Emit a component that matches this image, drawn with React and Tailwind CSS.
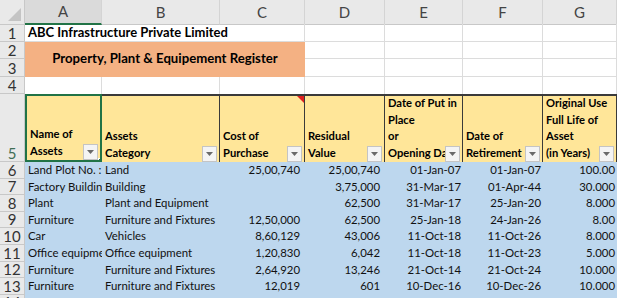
import React from "react";

const COLS = ["A", "B", "C", "D", "E", "F", "G"];

const HEADERS = [
  { lines: ["Name of", "Assets"] },
  { lines: ["Assets", "Category"] },
  { lines: ["Cost of", "Purchase"], note: true },
  { lines: ["Residual", "Value"] },
  { lines: ["Date of Put in", "Place", "or", "Opening Date"] },
  { lines: ["Date of", "Retirement"] },
  { lines: ["Original Use", "Full Life of", "Asset", "(in Years)"] },
];

const ROWS = [
  ["Land Plot No. :", "Land", "25,00,740", "25,00,740", "01-Jan-07", "01-Jan-07", "100.00"],
  ["Factory Building", "Building", "", "3,75,000", "31-Mar-17", "01-Apr-44", "30.000"],
  ["Plant", "Plant and Equipment", "", "62,500", "31-Mar-17", "25-Jan-20", "8.000"],
  ["Furniture", "Furniture and Fixtures", "12,50,000", "62,500", "25-Jan-18", "24-Jan-26", "8.00"],
  ["Car", "Vehicles", "8,60,129", "43,006", "11-Oct-18", "11-Oct-26", "8.000"],
  ["Office equipment", "Office equipment", "1,20,830", "6,042", "11-Oct-18", "11-Oct-23", "5.000"],
  ["Furniture", "Furniture and Fixtures", "2,64,920", "13,246", "21-Oct-14", "21-Oct-24", "10.000"],
  ["Furniture", "Furniture and Fixtures", "12,019", "601", "10-Dec-16", "10-Dec-26", "10.000"],
  ["", "", "", "", "", "", ""],
];

// row header + A..G widths (G runs past the window edge)
const grid = "grid grid-cols-[25px_77px_118px_85px_80px_78px_80px_74px_20px]";
const RIGHT = [80, 78, 80, 74, 20];

function RowHead({ n, h, active }) {
  return (
    <div
      className={
        "flex shrink-0 items-end justify-center border-b border-r border-[#c8c8c8] bg-[#e9e9e9] text-[15px] leading-[16px] " +
        (active ? "text-[#3f6e55]" : "text-[#333]")
      }
      style={{ height: h }}
    >
      {n}
    </div>
  );
}

function FilterBtn() {
  return (
    <div className="absolute bottom-0 right-[2px] flex h-[16px] w-[15px] items-center justify-center border border-[#c4c4c4] bg-[#f4f4f4]">
      <svg width="7" height="4" viewBox="0 0 7 4">
        <path d="M0 0h7L3.5 4z" fill="#6a6a6a" />
      </svg>
    </div>
  );
}

export default function App() {
  return (
    <div className="h-[298px] w-[617px] overflow-hidden bg-white font-['Lato',sans-serif] text-black">
      {/* column letters */}
      <div className={grid + " h-[24px] bg-[#e9e9e9]"}>
        <div className="relative border-b border-r border-[#c8c8c8]">
          <svg className="absolute bottom-[3px] right-[3px]" width="13" height="13" viewBox="0 0 13 13">
            <path d="M13 0V13H0z" fill="#c4c4c4" />
          </svg>
        </div>
        {COLS.map((c) => (
          <div
            key={c}
            className={
              "flex items-center justify-center border-r border-[#d4d4d4] text-[15px] text-[#444] " +
              (c === "A" ? "border-b-2 border-b-[#217346] bg-[#dadada]" : "border-b border-b-[#c8c8c8]")
            }
          >
            {c}
          </div>
        ))}
        <div className="border-b border-[#c8c8c8]" />
      </div>

      {/* rows 1-4 */}
      <div className="flex">
        <div className="flex w-[25px] shrink-0 flex-col">
          {[1, 2, 3, 4].map((n) => (
            <RowHead key={n} n={n} h={17.5} />
          ))}
        </div>
        <div className="flex shrink-0 flex-col">
          <div className="flex h-[17.5px]">
            <div className="flex w-[280px] shrink-0 items-end whitespace-nowrap border-b border-r border-[#dcdcdc] pb-[1px] pl-[3px] text-[13px] font-bold leading-[15px]">
              ABC Infrastructure Private Limited
            </div>
            {RIGHT.map((w, i) => (
              <div key={i} className="shrink-0 border-b border-r border-[#dcdcdc]" style={{ width: w }} />
            ))}
          </div>
          <div className="flex h-[35px]">
            <div className="flex w-[280px] shrink-0 items-center justify-center whitespace-nowrap bg-[#f4b183] text-[13.2px] font-bold">
              Property, Plant &amp; Equipement Register
            </div>
            <div className="flex flex-col">
              {[0, 1].map((r) => (
                <div key={r} className="flex h-[17.5px]">
                  {RIGHT.map((w, i) => (
                    <div key={i} className="shrink-0 border-b border-r border-[#dcdcdc]" style={{ width: w }} />
                  ))}
                </div>
              ))}
            </div>
          </div>
          <div className="flex h-[17.5px]">
            {[77, 118, 85, ...RIGHT].map((w, i) => (
              <div key={i} className="shrink-0 border-r border-[#dcdcdc]" style={{ width: w }} />
            ))}
          </div>
        </div>
      </div>

      {/* header row 5 */}
      <div className={grid + " h-[68px]"}>
        <RowHead n={5} h={68} active />
        {HEADERS.map((h, i) => (
          <div
            key={i}
            className={
              "relative flex flex-col justify-end overflow-hidden whitespace-nowrap bg-[#ffe699] pb-[1px] pl-[3px] text-[11.2px] font-bold leading-[16.5px] " +
              (i === 0
                ? "border-2 border-[#217346]"
                : "border-r border-t-2 border-r-[#3a3a3a] border-t-[#3a3a3a]")
            }
          >
            {h.lines.map((l) => (
              <div key={l}>{l}</div>
            ))}
            <FilterBtn />
            {h.note && (
              <div className="absolute right-0 top-0 h-0 w-0 border-l-[7px] border-t-[7px] border-l-transparent border-t-[#e02020]" />
            )}
            {i === 0 && (
              <div className="absolute bottom-[-3px] right-[-3px] h-[5px] w-[5px] border border-white bg-[#217346]" />
            )}
          </div>
        ))}
        <div className="border-t-2 border-[#3a3a3a] bg-[#ffe699]" />
      </div>

      {/* data rows */}
      {ROWS.map((r, ri) => (
        <div key={ri} className={grid + " h-[16.6px]"}>
          <RowHead n={ri + 6} h={16.6} />
          {r.map((v, ci) => (
            <div
              key={ci}
              className={
                "overflow-hidden whitespace-nowrap bg-[#bdd7ee] text-[11.4px] leading-[16.6px] text-[#111] " +
                (ci < 2 ? "pl-[3px] text-left" : ci < 4 ? "pr-[5px] text-right" : "pr-[2px] text-right")
              }
            >
              {v}
            </div>
          ))}
          <div className="bg-[#bdd7ee]" />
        </div>
      ))}
    </div>
  );
}
